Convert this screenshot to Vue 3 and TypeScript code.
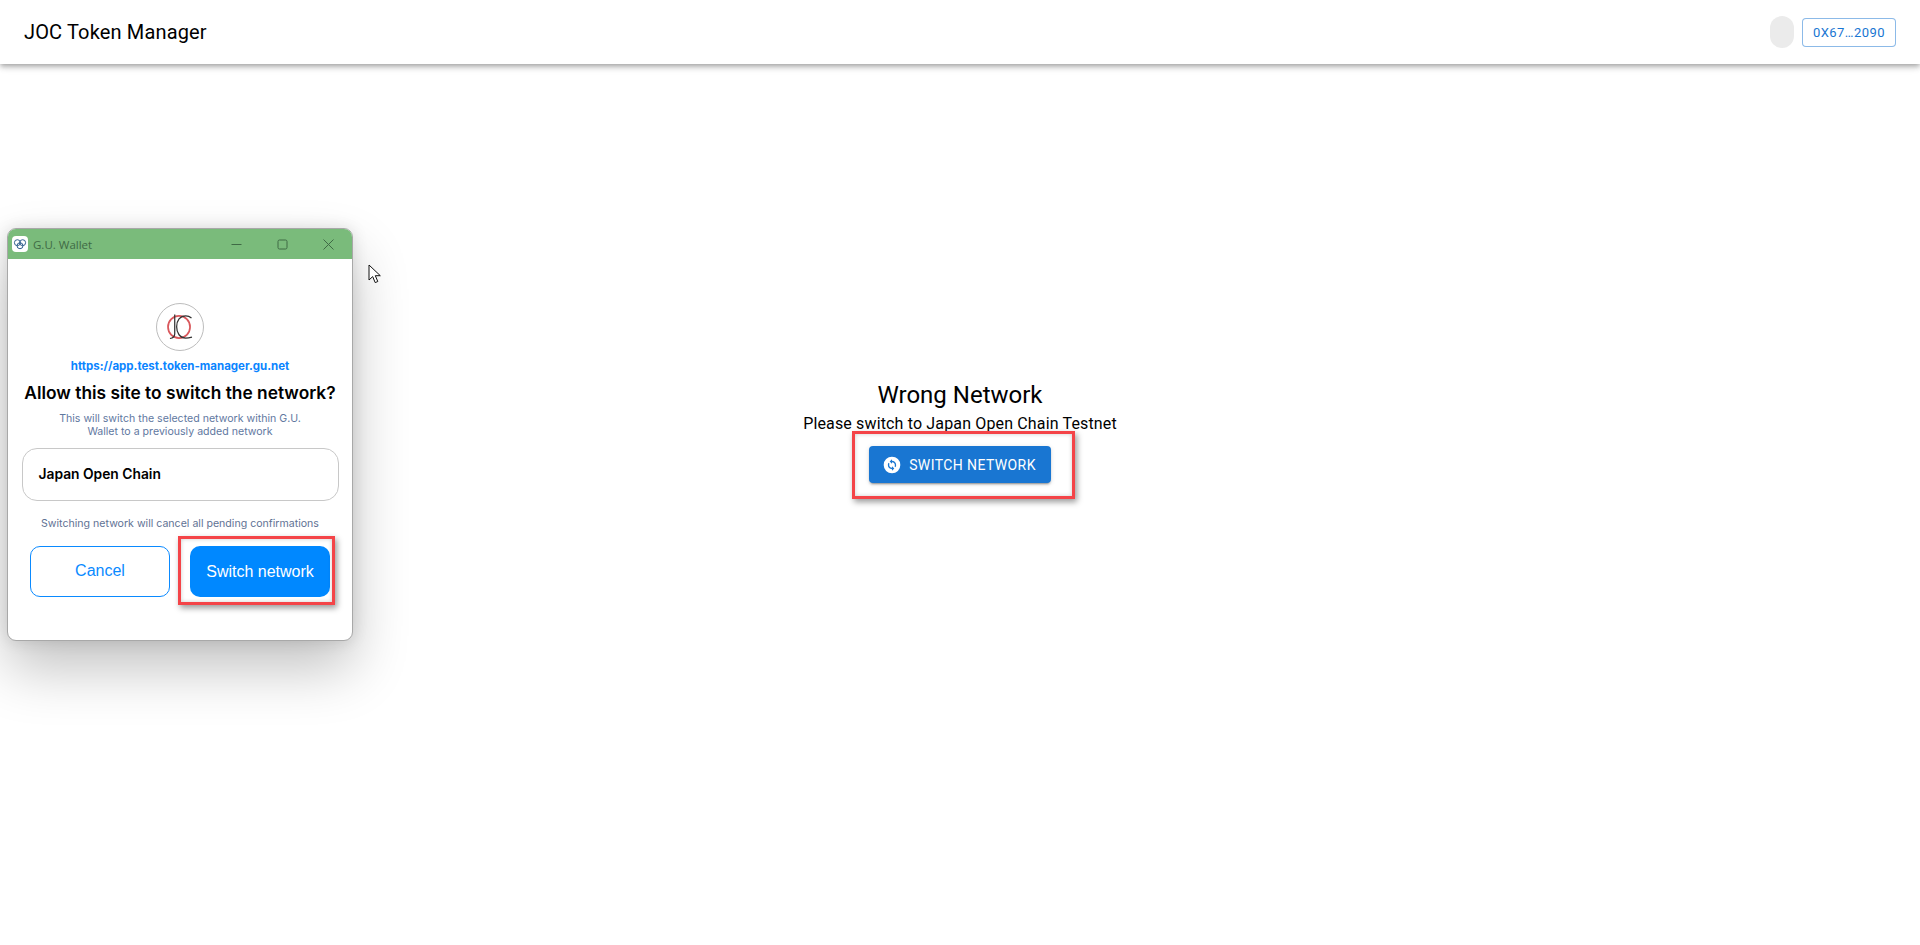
<script setup lang="ts">
const title: string = 'JOC Token Manager'
</script>

<template>
  <div class="page">
    <header class="bar">
      <div class="brand">{{ title }}</div>
      <div class="avatar"></div>
      <button class="account">0X67…2090</button>
    </header>

    <main class="main">
      <h2 class="heading">Wrong Network</h2>
      <p class="sub">Please switch to Japan Open Chain Testnet</p>
      <div class="cta-wrap">
        <button class="cta">
          <svg class="cta-icon" viewBox="0 0 24 24" width="20" height="20">
            <circle cx="12" cy="12" r="10" fill="#fff" />
            <path fill="#1976d2" d="M12 7V5L9.2 7.8 12 10.6V8.6c1.9 0 3.4 1.5 3.4 3.4 0 .6-.1 1.1-.4 1.6l1.2 1.2c.5-.8.8-1.8.8-2.8 0-2.8-2.2-5-5-5zm0 8.4c-1.9 0-3.4-1.5-3.4-3.4 0-.6.1-1.1.4-1.6L7.8 9.2C7.3 10 7 11 7 12c0 2.8 2.2 5 5 5v2l2.8-2.8L12 13.400z" />
          </svg>
          <span>SWITCH NETWORK</span>
        </button>
        <div class="mark mark-main"></div>
      </div>
    </main>

    <section class="win">
      <div class="titlebar">
        <span class="app-icon">
          <svg viewBox="0 0 16 16" width="14" height="14" fill="none" stroke="#2b5a8a" stroke-width="1.1">
            <circle cx="5" cy="6.500" r="3.400" />
            <circle cx="11" cy="6.500" r="3.400" />
            <circle cx="8" cy="10" r="3.400" />
          </svg>
        </span>
        <span class="app-name">G.U. Wallet</span>
        <span class="controls">
          <svg viewBox="0 0 11 11" width="11" height="11"><path d="M0.500 5.500h10" stroke="#3f6a45" stroke-width="1" /></svg>
          <svg viewBox="0 0 11 11" width="11" height="11"><rect x="1" y="1" width="9" height="9" rx="1.500" fill="none" stroke="#3f6a45" stroke-width="1" /></svg>
          <svg viewBox="0 0 11 11" width="11" height="11"><path d="M.5.5l10 10M10.500.5l-10 10" stroke="#3f6a45" stroke-width="1" /></svg>
        </span>
      </div>
      <div class="win-body">
        <div class="logo">
          <svg viewBox="0 0 48 48" width="46" height="46" fill="none">
            <circle cx="23" cy="24" r="11.500" stroke="#d9585c" stroke-width="1.800" />
            <path d="M18.500 11v20c0 3-1.500 4.500-5 5" stroke="#333" stroke-width="1.300" />
            <path d="M36 14.500c-2-1.600-4-2.200-6-2.200-6 0-9.500 5-9.500 11.500S24 35.500 30 35.500c2.300 0 4.500-.5 6.500-1" stroke="#333" stroke-width="1.300" />
          </svg>
        </div>
        <a class="origin">https://app.test.token-manager.gu.net</a>
        <h3 class="ask">Allow this site to switch the network?</h3>
        <p class="desc">This will switch the selected network within G.U.<br />Wallet to a previously added network</p>
        <div class="network">Japan Open Chain</div>
        <p class="warn">Switching network will cancel all pending confirmations</p>
        <div class="actions">
          <button class="btn btn-cancel">Cancel</button>
          <div class="confirm-wrap">
            <button class="btn btn-confirm">Switch network</button>
            <div class="mark mark-win"></div>
          </div>
        </div>
      </div>
    </section>

    <svg class="cursor" viewBox="0 0 13 20" width="13" height="20">
      <path d="M1 1v15l3.700-3.400 2.500 6 2.600-1.100-2.500-5.800h5z" fill="#fff" stroke="#111" stroke-width="1" stroke-linejoin="round" />
    </svg>
  </div>
</template>

<style>
html, body { margin: 0; background: #fff; }
</style>

<style scoped>
.page {
  position: relative;
  width: 1920px;
  height: 945px;
  overflow: hidden;
  background: #fff;
  font-family: Roboto, "Liberation Sans", sans-serif;
  color: #000;
}
.bar {
  height: 64px;
  display: flex;
  align-items: center;
  padding: 0 24px;
  box-sizing: border-box;
  background: #fff;
  box-shadow: 0 2px 4px -1px rgba(0,0,0,.2), 0 4px 5px rgba(0,0,0,.14), 0 1px 10px rgba(0,0,0,.12);
}
.brand { font-size: 20px; font-weight: 400; letter-spacing: .15px; flex: 1; }
.avatar { width: 24px; height: 32px; border-radius: 12px; background: #ebebeb; margin-right: 8px; }
.account {
  width: 94px; height: 29px; padding: 0; box-sizing: border-box;
  border: 1px solid rgba(25,118,210,.5); border-radius: 4px; background: #fff; color: #1976d2;
  font: 400 13px/1 Roboto, sans-serif; letter-spacing: .46px;
}
.main { display: flex; flex-direction: column; align-items: center; padding-top: 316px; }
.heading { margin: 0; font-size: 24px; font-weight: 400; line-height: 30px; }
.sub { margin: 2px 0 0; font-size: 16px; line-height: 24px; letter-spacing: .15px; }
.cta-wrap { position: relative; margin-top: 10px; }
.cta {
  width: 182px; height: 37px; display: flex; align-items: center; justify-content: center; gap: 7px;
  padding: 0; border: 0; border-radius: 4px; background: #1976d2; color: #fff;
  font: 400 14px/1 Roboto, sans-serif; letter-spacing: .4px;
  box-shadow: 0 3px 1px -2px rgba(0,0,0,.2), 0 2px 2px rgba(0,0,0,.14), 0 1px 5px rgba(0,0,0,.12);
}
.cta-icon { margin-left: -2px; }
.mark {
  position: absolute; box-sizing: border-box; border: 3px solid #f44448;
  box-shadow: 2px 3px 6px rgba(0,0,0,.4), inset 0 0 4px rgba(0,0,0,.2);
  pointer-events: none;
}
.mark-main { left: -17px; top: -15px; width: 223px; height: 68px; }
.win {
  position: absolute; left: 7px; top: 228px; width: 346px; height: 413px; box-sizing: border-box;
  display: flex; flex-direction: column; border-radius: 9px; background: #fff;
  border: 1px solid #a8a8a8; overflow: visible;
  box-shadow: 0 28px 56px rgba(0,0,0,.24), 0 0 16px rgba(0,0,0,.12);
  font-family: Inter, "Liberation Sans", sans-serif;
}
.titlebar {
  height: 30px; display: flex; align-items: center; padding: 0 0 0 4px; background: #7abb7b;
  border-radius: 8px 8px 0 0; flex: none;
}
.app-icon { width: 16px; height: 16px; border-radius: 4px; background: #fff; display: flex; align-items: center; justify-content: center; }
.app-name { margin-left: 5px; font: 11.500px "Open Sans", "Liberation Sans", sans-serif; color: #3f6a45; flex: 1; }
.controls { display: flex; gap: 35px; padding-right: 18px; }
.controls svg { display: block; }
.win-body { display: flex; flex-direction: column; align-items: center; padding-top: 44px; }
.logo {
  width: 48px; height: 48px; box-sizing: border-box; border: 1px solid #bdbdbd; border-radius: 50%;
  display: flex; align-items: center; justify-content: center;
}
.origin { margin-top: 7px; font-size: 11.500px; line-height: 16px; font-weight: 700; color: #0a84ff; }
.ask { margin: 8px 0 0; font-size: 17.350px; line-height: 22px; font-weight: 600; white-space: nowrap; }
.desc { margin: 8px 0 0; font-size: 10.600px; line-height: 13px; text-align: center; color: #5f789f; }
.network {
  margin-top: 10px; width: 317px; height: 53px; box-sizing: border-box; padding: 0 0 2px 16px;
  display: flex; align-items: center; border: 1px solid #c8c8c8; border-radius: 15px;
  font-size: 13.800px; font-weight: 600; color: #000;
}
.warn { margin: 16px 0 0; font-size: 10.600px; line-height: 14px; color: #5f7294; }
.actions { display: flex; gap: 20px; margin-top: 15px; }
.btn {
  width: 140px; height: 51px; padding: 0; box-sizing: border-box; border-radius: 10px;
  font: 16px "Liberation Sans", Arial, sans-serif;
}
.btn-cancel { background: #fff; border: 1px solid #0a8aff; color: #0a8aff; padding-bottom: 2px; }
.btn-confirm { background: #0088ff; border: 0; color: #fff; display: block; }
.confirm-wrap { position: relative; }
.mark-win { left: -12px; top: -10px; width: 157px; height: 69px; }
.cursor { position: absolute; left: 368px; top: 264px; }
</style>
